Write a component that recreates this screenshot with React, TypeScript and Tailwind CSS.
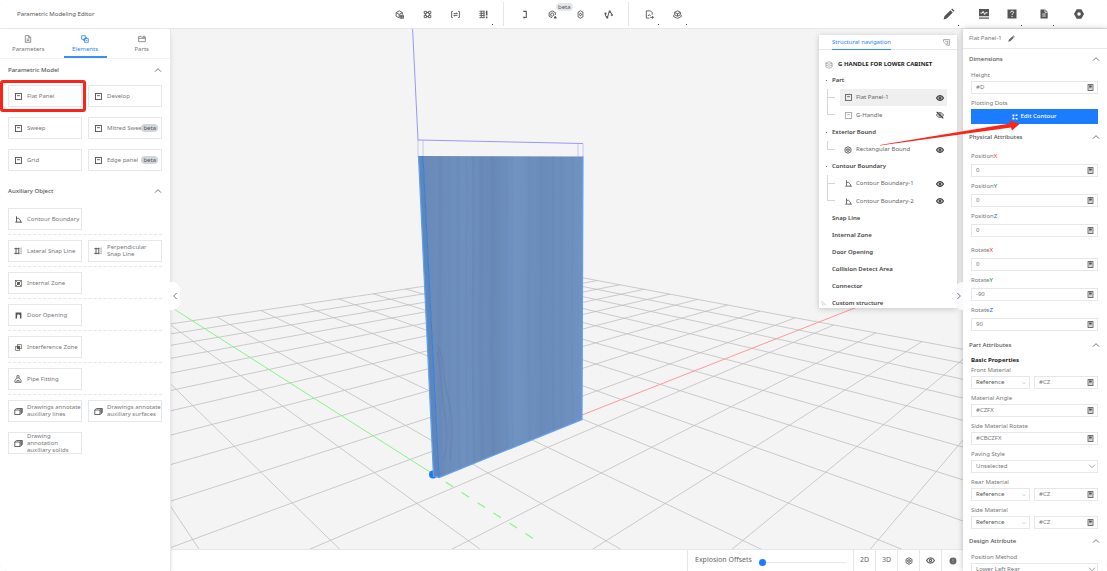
import React from 'react';

type IconProps = { className?: string };

const svgProps = {
  viewBox: '0 0 12 12',
  fill: 'none',
  stroke: 'currentColor',
  strokeWidth: 1.2,
  'aria-hidden': true,
} as const;

/* ---------- ICONS ---------- */

const PanelIcon = ({ className = 'size-[7px]' }: IconProps) => (
  <svg {...svgProps} className={className}>
    <rect x="0.9" y="0.9" width="10.2" height="10.2" strokeWidth="1.6" />
    <path d="M3.6 4.6h4.8" strokeWidth="1.6" />
  </svg>
);

const ContourIcon = ({ className = 'size-[7px]' }: IconProps) => (
  <svg {...svgProps} className={className}>
    <path d="M2.6 0.5v10.100H12M0.500 10.600h2" strokeWidth="1.600" />
    <path d="M2.600 4h3.400l3.200 3v3.600" strokeWidth="1.600" />
  </svg>
);

const SnapIcon = ({ className = 'size-2' }: IconProps) => (
  <svg {...svgProps} className={className}>
    <path d="M3 1v10M7.200 1v10M0.500 2.500h7.500M0.500 9.500h7.500" strokeWidth="1.400" />
    <path d="M10.600 1v10" strokeDasharray="1.600 1" />
  </svg>
);

const ZoneIcon = ({ className = 'size-[7px]' }: IconProps) => (
  <svg {...svgProps} className={className}>
    <rect x="1" y="1" width="10" height="10" />
    <path d="M1.5 1.5l2.6 2.6M10.5 1.5L7.9 4.1M1.5 10.5l2.6-2.6M10.5 10.5L7.9 7.9" />
    <rect x="4" y="4" width="4" height="4" fill="currentColor" />
  </svg>
);

const DoorIcon = ({ className = 'size-[7px]' }: IconProps) => (
  <svg viewBox="0 0 12 12" fill="currentColor" aria-hidden="true" className={className}>
    <path d="M1 1h10v10H8.4V5.2L6 4 3.6 5.2V11H1z" />
  </svg>
);

const InterferenceIcon = ({ className = 'size-[7px]' }: IconProps) => (
  <svg {...svgProps} className={className}>
    <rect x="1.2" y="4" width="6.8" height="6.8" />
    <rect x="4" y="1.2" width="6.8" height="6.8" />
    <rect x="4" y="4" width="4" height="4" fill="currentColor" />
  </svg>
);

const PipeIcon = ({ className = 'size-2' }: IconProps) => (
  <svg {...svgProps} className={className}>
    <path d="M4.4 1h3.2v3.2l3 4V11H1.4V8.2l3-4zM4.4 4.4h3.2M4.4 11V8.2h3.2V11" />
  </svg>
);

const CubeIcon = ({ className = 'size-[9px]' }: IconProps) => (
  <svg {...svgProps} className={className}>
    <path d="M1 4h7v6H1zM1 4l2.6-2H11L8 4M11 2v5.6L8 10" />
    <path d="M9.6 3.4v5" strokeWidth="1.6" />
  </svg>
);

const HexBoxIcon = ({ className = 'size-2' }: IconProps) => (
  <svg {...svgProps} className={className}>
    <path d="M6 1l4.4 2.4v5.2L6 11 1.6 8.6V3.4z" strokeWidth="1.500" />
    <path d="M6 3.600l2.200 1.200v2.400L6 8.400 3.800 7.200V4.800zM3.800 4.800L6 6l2.200-1.200M6 6v2.400" />
  </svg>
);

const LayersIcon = ({ className = 'size-2' }: IconProps) => (
  <svg {...svgProps} className={className}>
    <path d="M6 1l4.6 2v6L6 11 1.4 9V3zM1.4 3L6 5l4.6-2M1.4 6L6 8l4.6-2" strokeWidth="0.9" />
  </svg>
);

const EyeIcon = ({ className = 'size-2' }: IconProps) => (
  <svg {...svgProps} className={className}>
    <path d="M0.8 6C2 3.6 3.8 2.5 6 2.5S10 3.6 11.2 6C10 8.4 8.2 9.5 6 9.5S2 8.4 0.8 6z" strokeWidth="1.700" />
    <circle cx="6" cy="6" r="1.5" strokeWidth="1.600" />
  </svg>
);

const EyeOffIcon = ({ className = 'size-2' }: IconProps) => (
  <svg {...svgProps} className={className}>
    <path d="M0.8 6C2 3.6 3.8 2.5 6 2.5S10 3.6 11.2 6C10 8.4 8.2 9.5 6 9.5S2 8.4 0.8 6z" />
    <circle cx="6" cy="6" r="1.6" />
    <path d="M1 1.2l10 9.8" strokeWidth="1.6" />
  </svg>
);

const CalcIcon = ({ className = 'size-[7px]' }: IconProps) => (
  <svg {...svgProps} className={className}>
    <rect x="1.8" y="1" width="8.4" height="10" strokeWidth="1.5" />
    <rect x="4" y="3" width="4" height="2.6" fill="currentColor" strokeWidth="1" />
    <path d="M3.4 8.4h5.4" strokeDasharray="1.2 0.7" />
  </svg>
);

const ChevronUp = ({ className = 'size-2' }: IconProps) => (
  <svg {...svgProps} className={className}>
    <path d="M1.5 8.5L6 4l4.500 4.500" />
  </svg>
);

const ChevronDown = ({ className = 'size-2' }: IconProps) => (
  <svg {...svgProps} className={className}>
    <path d="M1.5 4L6 8.5 10.5 4" />
  </svg>
);

const PencilIcon = ({ className = 'size-3' }: IconProps) => (
  <svg viewBox="0 0 12 12" fill="currentColor" aria-hidden="true" className={className}>
    <path d="M0.6 11.4l0.8-3.2 6-6 2.4 2.4-6 6zM8.2 1.5l1-1 2.3 2.3-1 1z" />
  </svg>
);

const DocIcon = ({ className = 'size-2' }: IconProps) => (
  <svg {...svgProps} className={className}>
    <path d="M2 1h5.5L10 3.5V11H2zM7 1v3h3M4 6.2h4M4 8.4h4" />
  </svg>
);

const ElementsIcon = ({ className = 'size-2' }: IconProps) => (
  <svg {...svgProps} className={className}>
    <path d="M1 1h5.4v5.4H1zM3.4 6.4V8h2M6.4 3.4h1.8v2M5.4 5.4H11V11H5.4zM7 8.2h2.4" />
  </svg>
);

const FolderIcon = ({ className = 'size-2' }: IconProps) => (
  <svg {...svgProps} className={className}>
    <path d="M1 2h3.6l1 1.4H11V10H1zM1 5h10M7.6 2H11" />
  </svg>
);

/* ---------- HEADER ---------- */

const toolGroups: { label: string; caret?: boolean; beta?: boolean; art: React.ReactNode }[][] = [
  [
    { label: 'Box settings', art: <><path d="M5.6 10.6L1.5 8.3V3.5L5.6 1.2l4.2 2.3v2.3M1.5 3.5l4.1 2.4 4.2-2.4M5.6 6v4" /><path d="M6.8 7h4.4v4H6.8zM6.8 9h4.4M9 7v4" /></> },
    { label: 'Array', art: <path d="M1.6 1.8h3.2v3H1.6zM7.2 1.8h3.2v3H7.2zM1.6 7.2h3.2v3H1.6zM7.2 7.2h3.2v3H7.2zM4.8 3.3h2.4M4.8 8.7h2.4M3.2 4.8v2.4M8.8 4.8v2.4" /> },
    { label: 'Formula', art: <path d="M2.4 2H0.8v8h1.6M9.6 2h1.600v8H9.600M3.400 4.800h5L7.200 3.400M8.600 7.200h-5l1.200 1.400" /> },
    { label: 'Table', caret: true, art: <><path d="M0.6 1.600h7M0.600 4.400h7M0.600 7.200h7M0.600 10.200h7M3 1.600v8.600M6.600 1.600v8.600" /><path d="M10.200 1v6.400M10.200 8.800v2.200" strokeWidth="2" /></> },
  ],
  [
    { label: 'Bend', art: <path d="M4.4 1.8h4v8.2h-4M5.400 8.600v2.800" strokeWidth="1.400" /> },
    { label: 'Smart box', beta: true, art: <><path d="M5.6 10.6L1.5 8.3V3.5L5.6 1.2l4.2 2.3v3" /><path d="M5.6 3.800l2 1.200v2.200l-2 1.200-2-1.200V5z" /><path d="M8.200 10.800l1.400-2.400 1.400 2.400z" fill="currentColor" /></> },
    { label: 'Link', art: <><path d="M2.800 5V2.800L6 1l3.200 1.800V5M2.800 7v2.200L6 11l3.200-1.800V7" /><path d="M6 3.800L7.400 6 6 8.200 4.600 6zM2.800 5v2M9.200 5v2" /></> },
    { label: 'Route', art: <><path d="M1.800 5.600c0 4 3.400 5.400 4 0.400S9 2 10.200 5.600" strokeWidth="1.400" /><path d="M1 3.800h2v2H1zM6.600 1h2v2h-2zM9.400 5.600h2v2h-2zM3.400 9h2v2h-2z" fill="currentColor" strokeWidth="0.500" /></> },
  ],
  [
    { label: 'Export', caret: true, art: <path d="M9.6 6.400V3.600L7.200 1.200H1.800v9.600h4M4 8l1.600-2 1.800 2M7 9.800h4.400M9.400 8.200l1.800 1.600-1.800 1.600" /> },
    { label: 'Library', caret: true, art: <><path d="M6 1l3.8 2v3.4L6 8.4 2.2 6.4V3zM2.2 3.2L6 5l3.8-1.8M6 5v3" /><path d="M1 6.600v2.200L6 11.200l5-2.400V6.600" /></> },
  ],
];

const Header = () => (
  <header className="flex h-[29px] shrink-0 items-center border-b border-gray-200 bg-white text-[#555]">
    <h1 className="w-[385px] shrink-0 pl-[17px] text-[6px]">Parametric Modeling Editor</h1>
    <div className="flex items-center">
      {toolGroups.map((group, i) => (
        <React.Fragment key={i}>
          {i > 0 && <span className="mx-1.5 h-6 w-px bg-gray-200" />}
          {group.map((tool) => (
            <button key={tool.label} aria-label={tool.label} className="relative flex w-7 justify-center">
              <svg {...svgProps} className="size-[9px]">{tool.art}</svg>
              {tool.caret && <span className="absolute -bottom-1.5 right-1 size-px bg-gray-700" />}
              {tool.beta && (
                <span className="absolute -top-[7px] left-4.5 rounded-full bg-gray-200 px-0.5 text-[6px] leading-2">beta</span>
              )}
            </button>
          ))}
        </React.Fragment>
      ))}
    </div>
    <div className="ml-auto flex items-center pr-[22px]">
      <button aria-label="Edit" className="relative mr-[23px]">
        <PencilIcon />
        <span className="absolute -right-1 -bottom-1.5 size-px bg-gray-700" />
      </button>
      <button aria-label="Statistics" className="mr-4">
        <svg viewBox="0 0 12 12" className="size-3" aria-hidden="true">
          <path d="M1 1h10v7.2H1zM1 9.4h10v1.4H1z" fill="currentColor" />
          <path d="M2.4 5h1.8l1-1.6 1.4 3 1-1.600h2" fill="none" stroke="#fff" />
        </svg>
      </button>
      <button aria-label="Help" className="relative mr-5">
        <svg viewBox="0 0 12 12" className="size-3" aria-hidden="true">
          <path d="M1.5 1.5h9v9h-9z" fill="currentColor" />
          <path d="M4.6 4.600c0-2 2.900-1.800 2.900-0.200 0 1.200-1.400 1-1.400 2.400M6.100 7.900v1.200" fill="none" stroke="#fff" />
        </svg>
        <span className="absolute -right-1 -bottom-1.5 size-px bg-gray-700" />
      </button>
      <button aria-label="File" className="relative mr-[23px]">
        <svg viewBox="0 0 12 12" className="size-3" aria-hidden="true">
          <path d="M2.5 1.5h4.8L9.700 4v6.500H2.500z" fill="currentColor" />
          <path d="M4.200 6h3.600M4.200 8h3.600M7 1.500V4.300h2.700" fill="none" stroke="#fff" strokeWidth="0.800" />
        </svg>
        <span className="absolute -right-1 -bottom-1.5 size-px bg-gray-700" />
      </button>
      <button aria-label="Settings">
        <svg viewBox="0 0 12 12" className="size-3" aria-hidden="true">
          <path d="M3.700 1.200h4.600L11 6l-2.700 4.800H3.700L1 6z" fill="currentColor" />
          <circle cx="6" cy="6" r="1.800" fill="#fff" />
        </svg>
      </button>
    </div>
  </header>
);

/* ---------- LEFT SIDEBAR ---------- */

type CardItem = { label: string; icon: React.FC<IconProps>; beta?: boolean; marked?: boolean };

const modelItems: CardItem[] = [
  { label: 'Flat Panel', icon: PanelIcon, marked: true },
  { label: 'Develop', icon: PanelIcon },
  { label: 'Sweep', icon: PanelIcon },
  { label: 'Mitred Sweep', icon: PanelIcon, beta: true },
  { label: 'Grid', icon: PanelIcon },
  { label: 'Edge panel', icon: PanelIcon, beta: true },
];

const auxRows: CardItem[][] = [
  [{ label: 'Contour Boundary', icon: ContourIcon }],
  [
    { label: 'Lateral Snap Line', icon: SnapIcon },
    { label: 'Perpendicular Snap Line', icon: SnapIcon },
  ],
  [{ label: 'Internal Zone', icon: ZoneIcon }],
  [{ label: 'Door Opening', icon: DoorIcon }],
  [{ label: 'Interference Zone', icon: InterferenceIcon }],
  [{ label: 'Pipe Fitting', icon: PipeIcon }],
  [
    { label: 'Drawings annotate auxiliary lines', icon: CubeIcon },
    { label: 'Drawings annotate auxiliary surfaces', icon: CubeIcon },
    { label: 'Drawing annotation auxiliary solids', icon: CubeIcon },
  ],
];

const Card = ({ item }: { item: CardItem }) => (
  <div className="relative">
    <button className="flex h-[22px] w-full items-center border border-gray-200 bg-white text-left text-[6px] leading-[7px] text-[#777]">
      <span className="flex w-[18px] shrink-0 justify-center text-[#555]">
        <item.icon />
      </span>
      <span className={item.beta ? 'overflow-hidden whitespace-nowrap' : ''}>{item.label}</span>
    </button>
    {item.beta && (
      <span className="absolute top-[7px] right-1 rounded-full bg-gray-300 px-0.5 text-[6px] leading-2 text-[#555]">beta</span>
    )}
    {item.marked && (
      <span className="pointer-events-none absolute -top-[5px] -right-1 -bottom-[5px] -left-2 rounded-[3px] border-3 border-[#fb2418]" />
    )}
  </div>
);

const SectionTitle = ({ children }: { children: string }) => (
  <button className="flex w-full items-center justify-between text-[6px] leading-2 font-medium text-[#555]">
    <span>{children}</span>
    <ChevronUp />
  </button>
);

const tabs = [
  { label: 'Parameters', icon: DocIcon },
  { label: 'Elements', icon: ElementsIcon },
  { label: 'Parts', icon: FolderIcon },
];

const LeftSidebar = () => (
  <aside className="relative z-10 w-[171px] shrink-0 border-r border-gray-200 bg-white shadow-md">
    <nav className="flex h-[30px] border-b border-gray-100">
      {tabs.map((tab) => {
        const active = tab.label === 'Elements';
        return (
          <button
            key={tab.label}
            className={`flex flex-1 flex-col items-center text-[6px] leading-2 ${active ? 'text-[#2b85f0]' : 'text-[#777]'}`}
          >
            <tab.icon className="mt-1.5 mb-0.5 size-2" />
            {tab.label}
            <span className={`mt-auto h-0.5 w-[43px] ${active ? 'bg-[#3b8ef3]' : ''}`} />
          </button>
        );
      })}
    </nav>
    <div className="px-2 pt-[7px]">
      <SectionTitle>Parametric Model</SectionTitle>
      <div className="mt-[11px] grid grid-cols-2 gap-x-1.5 gap-y-2.5">
        {modelItems.map((item) => <Card key={item.label} item={item} />)}
      </div>
      <div className="mt-4 mb-[13px]">
        <SectionTitle>Auxiliary Object</SectionTitle>
      </div>
      {auxRows.map((row, i) => (
        <div
          key={i}
          className={`grid grid-cols-2 gap-x-1.5 gap-y-2.5 ${i < auxRows.length - 1 ? 'mb-[5px] border-b border-dashed border-gray-200 pb-1' : ''}`}
        >
          {row.map((item) => <Card key={item.label} item={item} />)}
        </div>
      ))}
    </div>
    <button
      aria-label="Collapse sidebar"
      className="absolute top-[253px] -right-[10px] flex h-7 w-2.5 items-center justify-center rounded-r-lg bg-white text-[#555]"
    >
      <ChevronUp className="size-2 -rotate-90" />
    </button>
  </aside>
);

/* ---------- 3D VIEWPORT ---------- */

// Vanishing points of the two floor directions
const VA = { x: -62, y: 156.5 };
const VB = { x: 1190, y: 172.6 };

// Lines running down-right, all through VA
const slopeA = (k: number) => (548.6 - VA.y) / (198.7 + 140.3 * k - VA.x);
// Lines running up-right, all through VB
const slopeB = (n: number) => (159.5 + 1 / (0.00609 - 0.000351 * n) - VB.y) / (172 - VB.x);

const cross = (k: number, n: number) => {
  const a = slopeA(k);
  const b = slopeB(n);
  const x = (VB.y - b * VB.x - VA.y + a * VA.x) / (a - b);
  return { x, y: VA.y + a * (x - VA.x) };
};

const floorLines: number[][] = [];
for (let k = 0; k <= 13; k++) {
  const from = cross(k, 0);
  floorLines.push([from.x, from.y, 1400, VA.y + slopeA(k) * (1400 - VA.x)]);
}
for (let n = 0; n <= 15; n++) {
  const to = cross(13, n);
  floorLines.push([100, VB.y + slopeB(n) * (100 - VB.x), to.x, to.y]);
}

// x, opacity, stroke width
const grain = [
  [440, 0.06, 4], [449, 0.04, 2], [458, 0.07, 3], [466, 0.05, 2], [473, 0.1, 2], [481, 0.06, 4],
  [492, 0.08, 3], [506, 0.04, 2], [512, 0.06, 1], [529, 0.07, 3], [541, 0.04, 2], [553, 0.08, 2],
  [561, 0.05, 3], [572, 0.05, 2],
];

const Scene = () => (
  <svg
    viewBox="171 29 792 520"
    preserveAspectRatio="xMidYMid slice"
    className="absolute inset-0 size-full"
    role="img"
    aria-label="3D view of the flat panel"
  >
    <defs>
      <linearGradient id="wood" x1="0" x2="1">
        <stop offset="0" stopColor="#6a8ab6" />
        <stop offset="0.25" stopColor="#6e90be" />
        <stop offset="0.45" stopColor="#698ab7" />
        <stop offset="0.58" stopColor="#7093c2" />
        <stop offset="0.75" stopColor="#6a8cba" />
        <stop offset="1" stopColor="#6f92c2" />
      </linearGradient>
      <clipPath id="face">
        <path d="M423 156L583 156.500 582 419.500 439 477.500z" />
      </clipPath>
    </defs>
    <g stroke="#bfbfbf" strokeWidth="0.8">
      {floorLines.map(([x1, y1, x2, y2], i) => <line key={i} x1={x1} y1={y1} x2={x2} y2={y2} />)}
    </g>
    <path d="M433 474L170 306.500" stroke="#86f586" />
    <path d="M433 474L541 543.500" stroke="#86f586" strokeWidth="1.2" strokeDasharray="9 10" strokeDashoffset="-15" />
    <path d="M582 415L870 302" stroke="#f99" />
    <path d="M418 140v17M423 140.200V157M578 143.500V157M583 143.500V157" fill="none" stroke="#bdbafb" strokeWidth="0.8" />
    <path d="M412.600 29L418 140 583 143.500" fill="none" stroke="#9a96f9" />
    <circle cx="433" cy="474.500" r="4" fill="#1b7af5" />
    <path d="M418.500 156L423 156 439 477.500 433.500 475z" fill="#5f86b8" />
    <path d="M423 156L583 156.500 582 419.500 439 477.500z" fill="url(#wood)" />
    <g clipPath="url(#face)" fill="none" stroke="#4c6b98">
      {grain.map(([x, opacity, w]) => (
        <path key={x} d={`M${x} 150C${x + 2} 240 ${x - 3} 330 ${x + 2} 480`} strokeWidth={w} opacity={opacity} />
      ))}
      <path d="M437 345c8 12 5 28 9 44s9 36 4 70M437 352c5 14 3 34 7 56s3 40 0 52" opacity="0.180" strokeWidth="1.500" />
    </g>
    <path d="M418.500 156l15 320 5.500 1.500 143-58 1-263" fill="none" stroke="#5fa0f0" strokeWidth="1.200" />
    <path d="M423 156l16 321" stroke="#2f7fe6" />
  </svg>
);

/* ---------- STRUCTURE TREE ---------- */

type TreeGroup = { label: string; items?: { label: string; icon: React.FC<IconProps>; selected?: boolean; hidden?: boolean }[] };

const tree: TreeGroup[] = [
  { label: 'Part', items: [{ label: 'Flat Panel-1', icon: PanelIcon, selected: true }, { label: 'G-Handle', icon: PanelIcon, hidden: true }] },
  { label: 'Exterior Bound', items: [{ label: 'Rectangular Bound', icon: HexBoxIcon }] },
  { label: 'Contour Boundary', items: [{ label: 'Contour Boundary-1', icon: ContourIcon }, { label: 'Contour Boundary-2', icon: ContourIcon }] },
  { label: 'Snap Line' },
  { label: 'Internal Zone' },
  { label: 'Door Opening' },
  { label: 'Collision Detect Area' },
  { label: 'Connector' },
  { label: 'Custom structure' },
];

const StructurePanel = () => (
  <section className="absolute top-1.5 right-1.5 h-[273px] w-[138px] overflow-hidden bg-white text-[6px] text-[#444] shadow-[0_1px_6px_rgba(0,0,0,0.2)]">
    <div className="flex h-[15px] items-start justify-between border-b border-gray-200 pr-[7px] pl-[13px]">
      <button className="h-[15px] border-b border-[#3b8ef3] text-[6px] leading-[15px] text-[#2b85f0]">Structural navigation</button>
      <button aria-label="Dock panel" className="mt-1 text-[#888]">
        <svg {...svgProps} className="size-[7px]">
          <path d="M1 5V1h10v10H8M1 5l6 6M7 6.500V11M4 4h4v4" />
        </svg>
      </button>
    </div>
    <div className="flex h-[29px] items-center text-[6px] font-bold whitespace-nowrap text-[#222]">
      <span className="flex w-[19px] justify-center text-[#888]"><LayersIcon /></span>
      G HANDLE FOR LOWER CABINET
    </div>
    <ul className="-mt-[7px]">
      {tree.map((group) => (
        <li key={group.label}>
          <div className="flex h-[17px] items-center font-semibold">
            <span className="w-[13px] pl-[7px]">{group.items && <span className="block size-px bg-gray-500" />}</span>
            {group.label}
          </div>
          {group.items && (
            <ul className="pr-2.5 pl-2">
              {group.items.map((item, i) => (
                <li key={item.label} className={`flex items-center ${i === 0 ? 'h-[17px]' : 'h-[18px]'}`}>
                  <span className="flex h-full w-[13px] flex-col">
                    <span className="h-1/2 w-2 border-b border-l border-gray-300" />
                    <span className={`h-1/2 ${i < group.items!.length - 1 ? 'border-l border-gray-300' : ''}`} />
                  </span>
                  <div className={`flex h-[17px] flex-1 items-center pr-[3px] text-[#666] ${item.selected ? 'bg-[#efefef]' : ''}`}>
                    <span className={`flex w-4 justify-center ${item.hidden ? 'text-[#aaa]' : ''}`}><item.icon /></span>
                    {item.label}
                    <button aria-label={`Toggle ${item.label}`} className="ml-auto text-[#333]">
                      {item.hidden ? <EyeOffIcon /> : <EyeIcon />}
                    </button>
                  </div>
                </li>
              ))}
            </ul>
          )}
        </li>
      ))}
    </ul>
    <svg {...svgProps} className="absolute bottom-0.5 left-0.5 size-1.5 text-gray-400">
      <path d="M1 2l9 9M1 7l4 4" />
    </svg>
  </section>
);

/* ---------- BOTTOM BAR ---------- */

const BottomBar = () => (
  <footer className="flex h-[22px] shrink-0 justify-end border-t border-gray-200 bg-white text-[#666]">
    <div className="flex items-center border-l border-gray-200 px-[7px]">
      <label htmlFor="explosion" className="w-16 text-[7px] whitespace-nowrap">Explosion Offsets</label>
      <input
        id="explosion"
        type="range"
        defaultValue={0}
        className="mt-1 h-2 w-[87px] appearance-none bg-transparent [&::-webkit-slider-runnable-track]:h-px [&::-webkit-slider-runnable-track]:bg-gray-200 [&::-webkit-slider-thumb]:-mt-[3px] [&::-webkit-slider-thumb]:size-[7px] [&::-webkit-slider-thumb]:appearance-none [&::-webkit-slider-thumb]:rounded-full [&::-webkit-slider-thumb]:bg-[#1b7cff]"
      />
    </div>
    <button className="w-[22px] border-l border-gray-200 text-[7px]">2D</button>
    <button className="w-[22px] border-l border-gray-200 text-[7px]">3D</button>
    <button aria-label="Render mode" className="flex w-[22px] items-center justify-center border-l border-gray-200">
      <HexBoxIcon />
    </button>
    <button aria-label="Visibility" className="flex w-[22px] items-center justify-center border-l border-gray-200">
      <EyeIcon className="size-[9px]" />
    </button>
    <button aria-label="Info" className="flex w-[22px] items-center justify-center border-l border-gray-200">
      <svg viewBox="0 0 12 12" className="size-2" aria-hidden="true">
        <circle cx="6" cy="6" r="5.200" fill="currentColor" />
        <path d="M6 3v3.600M6 7.800v1.200" stroke="#bbb" />
      </svg>
    </button>
  </footer>
);

/* ---------- RIGHT SIDEBAR ---------- */

const ValueBox = ({ id, value, label }: { id?: string; value: string; label?: string }) => (
  <div className="flex h-[13px] min-w-0 flex-1 items-center border border-gray-200 pr-[3px]">
    <input id={id} aria-label={label} defaultValue={value} className="w-0 min-w-0 flex-1 pl-1 text-[6px] text-[#777] outline-none" />
    <button aria-label="Edit formula" className="text-[#555]"><CalcIcon /></button>
  </div>
);

const Field = ({ label, value, suffix, tone }: { label: string; value: string; suffix?: string; tone?: string }) => {
  const id = `f-${label}${suffix ?? ''}`.replace(/ /g, '-');
  return (
    <div>
      <label htmlFor={id} className={`block text-[6px] leading-[10px] ${suffix ? 'mb-[3px]' : 'mb-px'}`}>
        {label}
        {suffix && <span className={tone}>{suffix}</span>}
      </label>
      <div className="flex"><ValueBox id={id} value={value} /></div>
    </div>
  );
};

const MaterialField = ({ label }: { label: string }) => {
  const id = label.replace(/ /g, '-');
  return (
    <div>
      <label htmlFor={id} className="mb-px block text-[6px] leading-[10px]">{label}</label>
      <div className="flex gap-1">
        <div className="relative flex-1">
          <select id={id} className="block h-[13px] w-full appearance-none border border-gray-200 pl-1 text-[6px] leading-[11px] text-[#555]">
            <option>Reference</option>
          </select>
          <ChevronDown className="pointer-events-none absolute top-[5px] right-1 size-1 text-[#888]" />
        </div>
        <ValueBox value="#CZ" label={`${label} value`} />
      </div>
    </div>
  );
};

const SelectField = ({ label, value }: { label: string; value: string }) => {
  const id = label.replace(/ /g, '-');
  return (
    <div>
      <label htmlFor={id} className="mb-px block text-[6px] leading-[10px]">{label}</label>
      <div className="relative">
        <select id={id} className="block h-[13px] w-full appearance-none border border-gray-200 pl-1 text-[6px] leading-[11px] text-[#777]">
          <option>{value}</option>
        </select>
        <ChevronDown className="pointer-events-none absolute top-0.5 right-0.5 size-2 text-[#888]" />
      </div>
    </div>
  );
};

const axes = [
  { axis: 'X', tone: 'text-red-500' },
  { axis: 'Y', tone: 'text-green-700' },
  { axis: 'Z', tone: 'text-blue-600' },
];
const rotation = ['0', '-90', '90'];

const RightSidebar = () => (
  <aside className="relative z-10 w-[144px] shrink-0 bg-white text-[#777] shadow-[0_0_6px_rgba(0,0,0,0.25)]">
    <button
      aria-label="Collapse properties"
      className="absolute top-[253px] -left-2 flex h-7 w-2 items-center justify-center rounded-l-lg bg-gray-50 text-[#555]"
    >
      <ChevronUp className="size-2 rotate-90" />
    </button>
    <div className="h-full overflow-hidden">
      <div className="flex h-5 items-center gap-1.5 border-b border-gray-200 pl-1.5 text-[6px]">
        Flat Panel-1
        <button aria-label="Rename" className="text-[#666]"><PencilIcon className="size-[7px]" /></button>
      </div>
      <div className="pt-1.5 pr-[7px] pl-1.5"><SectionTitle>Dimensions</SectionTitle></div>
      <div className="mt-[7px] pr-[9px] pl-2">
        <Field label="Height" value="#D" />
        <p className="mt-1 mb-px text-[6px] leading-[10px]">Plotting Dots</p>
        <button className="flex h-[15px] w-full items-center justify-center gap-0.5 bg-[#1b7cff] text-[6px] font-medium text-white">
          <svg {...svgProps} className="size-1.5">
            <path d="M3 2.5h6M2.5 3v6M3 9.5h6" />
            <path d="M1 1h3v3H1zM8 1h3v3H8zM1 8h3v3H1zM8 8h3v3H8z" fill="currentColor" stroke="none" />
          </svg>
          Edit Contour
        </button>
      </div>
      <div className="pt-[9px] pr-[7px] pl-1.5"><SectionTitle>Physical Attributes</SectionTitle></div>
      <div className="mt-2.5 flex flex-col gap-1 pr-[9px] pl-2">
        {axes.map(({ axis, tone }) => <Field key={axis} label="Position" suffix={axis} tone={tone} value="0" />)}
      </div>
      <div className="mt-2 flex flex-col gap-1 pr-[9px] pl-2">
        {axes.map(({ axis, tone }, i) => <Field key={axis} label="Rotate" suffix={axis} tone={tone} value={rotation[i]} />)}
      </div>
      <div className="pt-2.5 pr-[7px] pl-1.5"><SectionTitle>Part Attributes</SectionTitle></div>
      <div className="mt-1.5 flex flex-col gap-1 pr-[9px] pl-2">
        <h3 className="-mb-1 text-[6px] leading-[10px] font-bold text-[#222]">Basic Properties</h3>
        <MaterialField label="Front Material" />
        <Field label="Material Angle" value="#CZFX" />
        <Field label="Side Material Rotate" value="#CBCZFX" />
        <SelectField label="Paving Style" value="Unselected" />
        <MaterialField label="Rear Material" />
        <MaterialField label="Side Material" />
      </div>
      <div className="pt-2 pr-[7px] pl-1.5"><SectionTitle>Design Attribute</SectionTitle></div>
      <div className="mt-[7px] pr-[9px] pl-2">
        <SelectField label="Position Method" value="Lower Left Rear" />
      </div>
    </div>
  </aside>
);

export default function App() {
  return (
    <div className="relative flex h-screen flex-col overflow-hidden rounded-lg bg-[#f4f4f4] font-['Noto_Sans','Open_Sans',sans-serif]">
      <Header />
      <div className="flex min-h-0 flex-1">
        <LeftSidebar />
        <div className="flex min-w-0 flex-1 flex-col">
          <main className="relative min-h-0 flex-1 overflow-hidden">
            <Scene />
            <StructurePanel />
          </main>
          <BottomBar />
        </div>
        <RightSidebar />
      </div>

      {/* Callout arrow towards the Edit Contour button */}
      <svg viewBox="0 0 144 28" className="pointer-events-none absolute top-[120px] right-[85px] z-20 h-7 w-36" aria-hidden="true">
        <path d="M2 25L132 3.5 131.5 0.5 141.5 4 134 10.5 133 7.5 2 25.5z" fill="#fb2418" />
      </svg>
    </div>
  );
}
